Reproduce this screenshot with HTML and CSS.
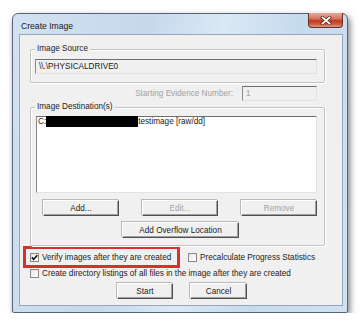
FILE: index.html
```html
<!DOCTYPE html>
<html>
<head>
<meta charset="utf-8">
<link rel="stylesheet" href="styles.css">
</head>
<body>
<div class="window">
  <div class="titlebar">
    <span class="title">Create Image</span>
    <div class="close">
      <svg width="12" height="9" viewBox="0 0 12 9">
        <path d="M2.5 1.5 L9.5 7.5 M9.5 1.5 L2.5 7.5" stroke="#5a2a22" stroke-width="3.4" stroke-linecap="square"/>
        <path d="M2.5 1.5 L9.5 7.5 M9.5 1.5 L2.5 7.5" stroke="#ffffff" stroke-width="1.8" stroke-linecap="square"/>
      </svg>
    </div>
  </div>
  <div class="client">
    <div class="group src">
      <span class="legend">Image Source</span>
      <div class="field ro">\\.\PHYSICALDRIVE0</div>
    </div>
    <div class="evidence">
      <span class="disabled">Starting Evidence Number:</span>
      <div class="field num disabled">1</div>
    </div>
    <div class="group dest">
      <span class="legend">Image Destination(s)</span>
      <div class="list">
        <div class="item">C:<span class="redact"></span>testimage [raw/dd]</div>
      </div>
      <div class="btnrow">
        <div class="btn">Add...</div>
        <div class="btn disabled">Edit...</div>
        <div class="btn disabled">Remove</div>
      </div>
      <div class="btn overflow">Add Overflow Location</div>
    </div>
    <div class="checks1">
      <div class="hl">
        <span class="cb checked"><svg width="7" height="7" viewBox="0 0 7 7"><path d="M0.8 3.4 L2.7 5.4 L6.3 1.2" fill="none" stroke="#111" stroke-width="1.6"/></svg></span>
        <span>Verify images after they are created</span>
      </div>
      <div class="opt pre">
        <span class="cb"></span>
        <span>Precalculate Progress Statistics</span>
      </div>
    </div>
    <div class="opt checks2">
      <span class="cb"></span>
      <span>Create directory listings of all files in the image after they are created</span>
    </div>
    <div class="actions">
      <div class="btn start">Start</div>
      <div class="btn cancel">Cancel</div>
    </div>
  </div>
</div>
</body>
</html>
```

FILE: styles.css
```css
body {
  margin: 0;
  background: #ffffff;
  font-family: "Liberation Sans", Arial, sans-serif;
  font-size: 8.2px;
  color: #1c1c1c;
}

.window {
  margin: 13px 0 0 12px;
  width: 336px;
  height: 300px;
  box-sizing: border-box;
  border: 1px solid #56657a;
  border-radius: 6px 6px 2px 2px;
  background: linear-gradient(100deg, #d3e1f0 0%, #c5d8ec 35%, #dbe8f5 55%, #c6daee 75%, #d0e1f2 100%);
  box-shadow: 2px 3px 6px rgba(0, 0, 0, 0.5);
  padding: 0 4px 6px 6px;
  display: flex;
  flex-direction: column;
}

.titlebar {
  height: 20px;
  display: flex;
  justify-content: space-between;
  align-items: flex-start;
}

.title {
  font-size: 8.6px;
  color: #1a1a1a;
  margin: 7px 0 0 2px;
}

.close {
  margin-top: -1px;
  width: 35px;
  height: 15px;
  box-sizing: border-box;
  border: 1px solid #6f2e24;
  border-top: none;
  border-radius: 0 0 4px 4px;
  background: linear-gradient(#e7ab9d 0%, #d67460 40%, #c13a22 55%, #cc5a42 80%, #df9a84 100%);
  display: flex;
  align-items: center;
  justify-content: center;
}

.client {
  flex: 1;
  background: #f0f0f0;
  border: 1px solid #97a6b8;
  box-sizing: border-box;
  display: flex;
  flex-direction: column;
  align-items: flex-start;
}

.group {
  position: relative;
  box-sizing: border-box;
  width: 295px;
  margin-left: 10px;
  border: 1px solid #c2c2c2;
  box-shadow: inset 1px 1px 0 #ffffff, 1px 1px 0 #ffffff;
  border-radius: 2px;
}

.legend {
  position: absolute;
  top: -6px;
  left: 4px;
  padding: 0 2px;
  background: #f0f0f0;
  line-height: 10px;
}

.src {
  margin-top: 14px;
  height: 34px;
  padding: 9px 0 0 4px;
}

.field {
  box-sizing: border-box;
  height: 15px;
  border-top: 1px solid #6f6f6f;
  border-left: 1px solid #8a8a8a;
  border-right: 1px solid #e2e2e2;
  border-bottom: 1px solid #e2e2e2;
  display: flex;
  align-items: center;
  padding-left: 3px;
}

.ro {
  width: 282px;
  background: #f0f0f0;
}

.evidence {
  margin: 3px 0 0 10px;
  width: 287px;
  display: flex;
  justify-content: flex-end;
  align-items: center;
  gap: 9px;
}

.disabled {
  color: #a3a3a3;
}

.num {
  width: 75px;
  background: #f0f0f0;
}

.dest {
  margin-top: 6px;
  height: 139px;
  padding: 8px 0 0 5px;
}

.list {
  box-sizing: border-box;
  width: 281px;
  height: 77px;
  background: #ffffff;
  border-top: 1px solid #6f6f6f;
  border-left: 1px solid #8a8a8a;
  border-right: 1px solid #e2e2e2;
  border-bottom: 1px solid #e2e2e2;
}

.item {
  display: flex;
  align-items: flex-start;
  height: 11px;
  line-height: 10px;
  padding-left: 1px;
}

.redact {
  display: inline-block;
  width: 92px;
  height: 11px;
  margin-top: -1px;
  background: #000000;
}

.btnrow {
  margin: 7px 0 0 7px;
  display: flex;
  gap: 23px;
}

.btn {
  box-sizing: border-box;
  height: 16px;
  width: 76px;
  display: flex;
  align-items: center;
  justify-content: center;
  background: #f0f0f0;
  border: 1px solid;
  border-color: #ffffff #505050 #505050 #ffffff;
  box-shadow: inset -1px -1px 0 #a0a0a0, -1px -1px 0 #b9b9b9;
}

.overflow {
  margin: 6px 0 0 86px;
  width: 117px;
}

.checks1 {
  display: flex;
  align-items: center;
}

.hl {
  margin-left: 3px;
  width: 157px;
  height: 22px;
  box-sizing: border-box;
  border: 3px solid #d9302c;
  display: flex;
  align-items: center;
  padding-left: 4px;
  gap: 3px;
}

.opt {
  display: flex;
  align-items: center;
  gap: 3px;
}

.pre {
  margin-left: 8px;
}

.cb {
  width: 9px;
  height: 9px;
  box-sizing: border-box;
  border: 1px solid #8a8a8a;
  background: linear-gradient(135deg, #e6e6e6, #ffffff);
  display: flex;
  align-items: center;
  justify-content: center;
}

.checks2 {
  margin: 0 0 0 10px;
  height: 10px;
}

.actions {
  margin: 5px 0 0 97px;
  display: flex;
  gap: 17px;
}

.start {
  width: 56px;
}

.cancel {
  width: 57px;
}
```
